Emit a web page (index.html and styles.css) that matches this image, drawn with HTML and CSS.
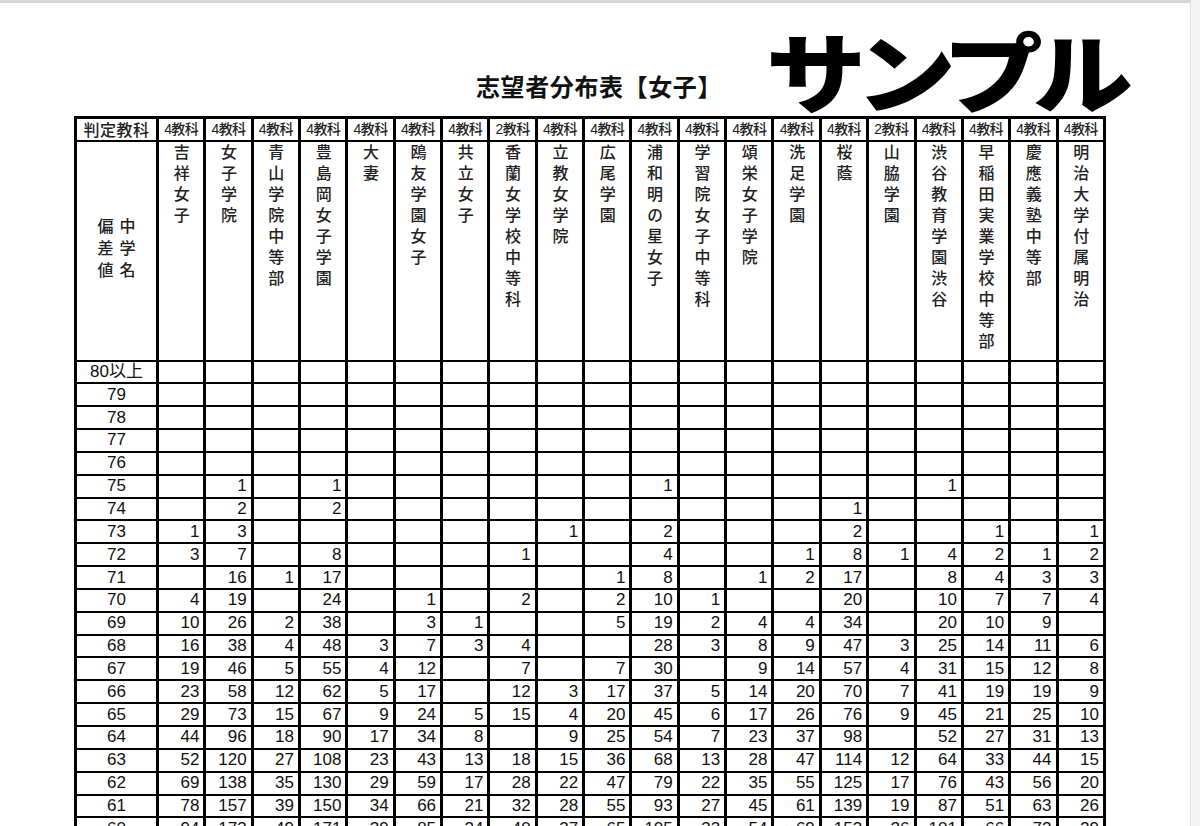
FILE: index.html
```html
<!DOCTYPE html>
<html lang="ja">
<head>
<meta charset="utf-8">
<title>志望者分布表【女子】</title>
<link rel="stylesheet" href="styles.css">
</head>
<body>
<div class="page">
  <div class="stamp">サンプル</div>
  <div class="title-row"><h1 class="title">志望者分布表【女子】</h1></div>
  <table class="dist">
    <colgroup><col class="c-label"><col span="20"></colgroup>
    <thead>
      <tr class="subj">
        <th class="lbl">判定教科</th>
        <th>4教科</th><th>4教科</th><th>4教科</th><th>4教科</th><th>4教科</th>
        <th>4教科</th><th>4教科</th><th>2教科</th><th>4教科</th><th>4教科</th>
        <th>4教科</th><th>4教科</th><th>4教科</th><th>4教科</th><th>4教科</th>
        <th>2教科</th><th>4教科</th><th>4教科</th><th>4教科</th><th>4教科</th>
      </tr>
      <tr class="names">
        <th class="corner"><span class="vt two">中学名<br>偏差値</span></th>
        <th><span class="vt">吉祥女子</span></th>
        <th><span class="vt">女子学院</span></th>
        <th><span class="vt">青山学院中等部</span></th>
        <th><span class="vt">豊島岡女子学園</span></th>
        <th><span class="vt">大妻</span></th>
        <th><span class="vt">鴎友学園女子</span></th>
        <th><span class="vt">共立女子</span></th>
        <th><span class="vt">香蘭女学校中等科</span></th>
        <th><span class="vt">立教女学院</span></th>
        <th><span class="vt">広尾学園</span></th>
        <th><span class="vt">浦和明の星女子</span></th>
        <th><span class="vt">学習院女子中等科</span></th>
        <th><span class="vt">頌栄女子学院</span></th>
        <th><span class="vt">洗足学園</span></th>
        <th><span class="vt">桜蔭</span></th>
        <th><span class="vt">山脇学園</span></th>
        <th><span class="vt">渋谷教育学園渋谷</span></th>
        <th><span class="vt">早稲田実業学校中等部</span></th>
        <th><span class="vt">慶應義塾中等部</span></th>
        <th><span class="vt">明治大学付属明治</span></th>
      </tr>
    </thead>
    <tbody>
      <tr><th>80以上</th><td></td><td></td><td></td><td></td><td></td><td></td><td></td><td></td><td></td><td></td><td></td><td></td><td></td><td></td><td></td><td></td><td></td><td></td><td></td><td></td></tr>
      <tr><th>79</th><td></td><td></td><td></td><td></td><td></td><td></td><td></td><td></td><td></td><td></td><td></td><td></td><td></td><td></td><td></td><td></td><td></td><td></td><td></td><td></td></tr>
      <tr><th>78</th><td></td><td></td><td></td><td></td><td></td><td></td><td></td><td></td><td></td><td></td><td></td><td></td><td></td><td></td><td></td><td></td><td></td><td></td><td></td><td></td></tr>
      <tr><th>77</th><td></td><td></td><td></td><td></td><td></td><td></td><td></td><td></td><td></td><td></td><td></td><td></td><td></td><td></td><td></td><td></td><td></td><td></td><td></td><td></td></tr>
      <tr><th>76</th><td></td><td></td><td></td><td></td><td></td><td></td><td></td><td></td><td></td><td></td><td></td><td></td><td></td><td></td><td></td><td></td><td></td><td></td><td></td><td></td></tr>
      <tr><th>75</th><td></td><td>1</td><td></td><td>1</td><td></td><td></td><td></td><td></td><td></td><td></td><td>1</td><td></td><td></td><td></td><td></td><td></td><td>1</td><td></td><td></td><td></td></tr>
      <tr><th>74</th><td></td><td>2</td><td></td><td>2</td><td></td><td></td><td></td><td></td><td></td><td></td><td></td><td></td><td></td><td></td><td>1</td><td></td><td></td><td></td><td></td><td></td></tr>
      <tr><th>73</th><td>1</td><td>3</td><td></td><td></td><td></td><td></td><td></td><td></td><td>1</td><td></td><td>2</td><td></td><td></td><td></td><td>2</td><td></td><td></td><td>1</td><td></td><td>1</td></tr>
      <tr><th>72</th><td>3</td><td>7</td><td></td><td>8</td><td></td><td></td><td></td><td>1</td><td></td><td></td><td>4</td><td></td><td></td><td>1</td><td>8</td><td>1</td><td>4</td><td>2</td><td>1</td><td>2</td></tr>
      <tr><th>71</th><td></td><td>16</td><td>1</td><td>17</td><td></td><td></td><td></td><td></td><td></td><td>1</td><td>8</td><td></td><td>1</td><td>2</td><td>17</td><td></td><td>8</td><td>4</td><td>3</td><td>3</td></tr>
      <tr><th>70</th><td>4</td><td>19</td><td></td><td>24</td><td></td><td>1</td><td></td><td>2</td><td></td><td>2</td><td>10</td><td>1</td><td></td><td></td><td>20</td><td></td><td>10</td><td>7</td><td>7</td><td>4</td></tr>
      <tr><th>69</th><td>10</td><td>26</td><td>2</td><td>38</td><td></td><td>3</td><td>1</td><td></td><td></td><td>5</td><td>19</td><td>2</td><td>4</td><td>4</td><td>34</td><td></td><td>20</td><td>10</td><td>9</td><td></td></tr>
      <tr><th>68</th><td>16</td><td>38</td><td>4</td><td>48</td><td>3</td><td>7</td><td>3</td><td>4</td><td></td><td></td><td>28</td><td>3</td><td>8</td><td>9</td><td>47</td><td>3</td><td>25</td><td>14</td><td>11</td><td>6</td></tr>
      <tr><th>67</th><td>19</td><td>46</td><td>5</td><td>55</td><td>4</td><td>12</td><td></td><td>7</td><td></td><td>7</td><td>30</td><td></td><td>9</td><td>14</td><td>57</td><td>4</td><td>31</td><td>15</td><td>12</td><td>8</td></tr>
      <tr><th>66</th><td>23</td><td>58</td><td>12</td><td>62</td><td>5</td><td>17</td><td></td><td>12</td><td>3</td><td>17</td><td>37</td><td>5</td><td>14</td><td>20</td><td>70</td><td>7</td><td>41</td><td>19</td><td>19</td><td>9</td></tr>
      <tr><th>65</th><td>29</td><td>73</td><td>15</td><td>67</td><td>9</td><td>24</td><td>5</td><td>15</td><td>4</td><td>20</td><td>45</td><td>6</td><td>17</td><td>26</td><td>76</td><td>9</td><td>45</td><td>21</td><td>25</td><td>10</td></tr>
      <tr><th>64</th><td>44</td><td>96</td><td>18</td><td>90</td><td>17</td><td>34</td><td>8</td><td></td><td>9</td><td>25</td><td>54</td><td>7</td><td>23</td><td>37</td><td>98</td><td></td><td>52</td><td>27</td><td>31</td><td>13</td></tr>
      <tr><th>63</th><td>52</td><td>120</td><td>27</td><td>108</td><td>23</td><td>43</td><td>13</td><td>18</td><td>15</td><td>36</td><td>68</td><td>13</td><td>28</td><td>47</td><td>114</td><td>12</td><td>64</td><td>33</td><td>44</td><td>15</td></tr>
      <tr><th>62</th><td>69</td><td>138</td><td>35</td><td>130</td><td>29</td><td>59</td><td>17</td><td>28</td><td>22</td><td>47</td><td>79</td><td>22</td><td>35</td><td>55</td><td>125</td><td>17</td><td>76</td><td>43</td><td>56</td><td>20</td></tr>
      <tr><th>61</th><td>78</td><td>157</td><td>39</td><td>150</td><td>34</td><td>66</td><td>21</td><td>32</td><td>28</td><td>55</td><td>93</td><td>27</td><td>45</td><td>61</td><td>139</td><td>19</td><td>87</td><td>51</td><td>63</td><td>26</td></tr>
      <tr><th>60</th><td>94</td><td>173</td><td>49</td><td>171</td><td>39</td><td>85</td><td>24</td><td>40</td><td>37</td><td>65</td><td>105</td><td>33</td><td>54</td><td>69</td><td>153</td><td>26</td><td>101</td><td>66</td><td>72</td><td>29</td></tr>
    </tbody>
  </table>
</div>
</body>
</html>
```

FILE: styles.css
```css
html {
  overflow: hidden;
}

body {
  margin: 0;
  background: #f3f3f3;
  font-family: "Noto Sans CJK JP", sans-serif;
  color: #1a1a1a;
}

.page {
  position: relative;
  box-sizing: border-box;
  width: 1191px;
  height: 826px;
  background: #fff;
  border-top: 3px solid #d6d6d6;
  border-right: 1px solid #e2e2e2;
  padding: 66px 0 0 74px;
}

.stamp {
  position: absolute;
  left: 766px;
  top: 21px;
  font-size: 100px;
  font-weight: 900;
  line-height: 0.8;
  letter-spacing: -10px;
  color: #000;
  white-space: nowrap;
  transform: scaleY(0.87);
  transform-origin: left bottom;
}

.title-row {
  width: 1032px;
  height: 47px;
  display: flex;
  justify-content: center;
  padding-left: 18px;
  box-sizing: border-box;
}

.title {
  margin: 0;
  font-size: 24px;
  line-height: 34px;
  font-weight: 700;
  letter-spacing: 0.6px;
  color: #111;
}

.dist {
  border-collapse: collapse;
  table-layout: fixed;
  width: 1032px;
  border: 3px solid #000;
}

.c-label {
  width: 82px;
}

.dist th,
.dist td {
  border-left: 3px solid #000;
  border-right: 3px solid #000;
  border-top: 2px solid #000;
  border-bottom: 2px solid #000;
  padding: 0;
  overflow: hidden;
  white-space: nowrap;
}

.subj {
  height: 23px;
}

.subj th {
  font-family: "Liberation Sans", "Noto Sans CJK JP", sans-serif;
  font-size: 14px;
  font-weight: 500;
  line-height: 18px;
  text-align: center;
  letter-spacing: -0.6px;
  color: #222;
}

.subj th.lbl {
  font-family: "Noto Sans CJK JP", sans-serif;
  font-size: 16px;
  letter-spacing: 0.5px;
}

.names {
  height: 220px;
}

.names th {
  vertical-align: top;
  text-align: center;
  font-weight: 500;
  padding-top: 2px;
}

.vt {
  display: inline-block;
  writing-mode: vertical-rl;
  font-size: 16px;
  line-height: 21px;
  letter-spacing: 5px;
  color: #222;
}

.names th.corner {
  vertical-align: middle;
  padding-top: 0;
}

.vt.two {
  line-height: 22px;
  letter-spacing: 6px;
  padding-top: 6px;
}

.dist tbody tr {
  height: 22.85px;
}

.dist tbody th,
.dist tbody td {
  font-family: "Liberation Sans", "Noto Sans CJK JP", sans-serif;
  font-size: 17px;
  font-weight: 400;
  line-height: 18px;
  vertical-align: middle;
  color: #111;
}

.dist tbody th {
  text-align: center;
}

.dist tbody td {
  text-align: right;
  padding-right: 4px;
}
```
